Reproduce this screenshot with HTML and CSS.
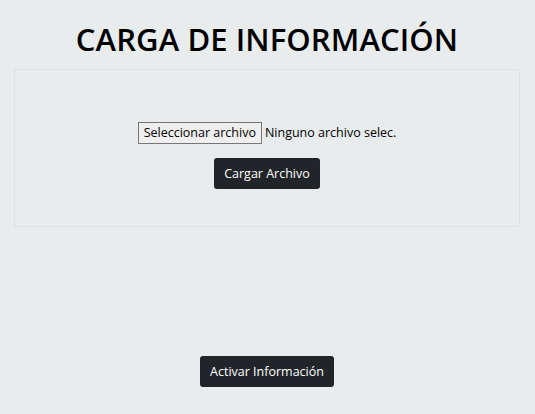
FILE: index.html
```html
<!DOCTYPE html>
<html lang="es">
<head>
<meta charset="utf-8">
<title>Carga de información</title>
<link rel="stylesheet" href="styles.css">
</head>
<body>
<main class="page">
  <h1 class="title">CARGA DE INFORMACIÓN</h1>
  <section class="panel">
    <div class="file-row">
      <span class="file-btn">Seleccionar archivo</span>
      <span class="file-name">Ninguno archivo selec.</span>
    </div>
    <button class="btn" type="button">Cargar Archivo</button>
  </section>
  <div class="footer">
    <button class="btn" type="button">Activar Información</button>
  </div>
</main>
</body>
</html>
```
FILE: styles.css
```css
html, body {
  margin: 0;
  padding: 0;
  background: #e9ecec;
  font-family: "Open Sans", "Noto Sans", sans-serif;
  color: #212529;
}
.page {
  display: flex;
  flex-direction: column;
  align-items: center;
  padding: 0 15px 0 14px;
}
.title {
  margin: 18px 0 0 0;
  font-size: 31px;
  font-weight: 600;
  line-height: 42px;
  color: #000;
  letter-spacing: 0.1px;
}
.panel {
  align-self: stretch;
  margin-top: 9px;
  border: 1px solid #dde1e3;
  display: flex;
  flex-direction: column;
  align-items: center;
  padding-top: 52px;
  box-sizing: border-box;
  height: 158px;
}
.file-row {
  display: flex;
  align-items: center;
  gap: 3px;
  font-size: 12.5px;
}
.file-btn {
  border: 1px solid #767676;
  background: #efefef;
  padding: 1px 5px;
  line-height: 18px;
  color: #000;
}
.file-name {
  color: #000;
  line-height: 20px;
}
.btn {
  margin-top: 14px;
  background: #212529;
  color: #fff;
  border: none;
  border-radius: 3px;
  font-family: "Open Sans", "Noto Sans", sans-serif;
  font-size: 12.5px;
  padding: 0 10px;
  height: 31px;
  line-height: 31px;
}
.footer {
  margin-top: 115px;
}
```
